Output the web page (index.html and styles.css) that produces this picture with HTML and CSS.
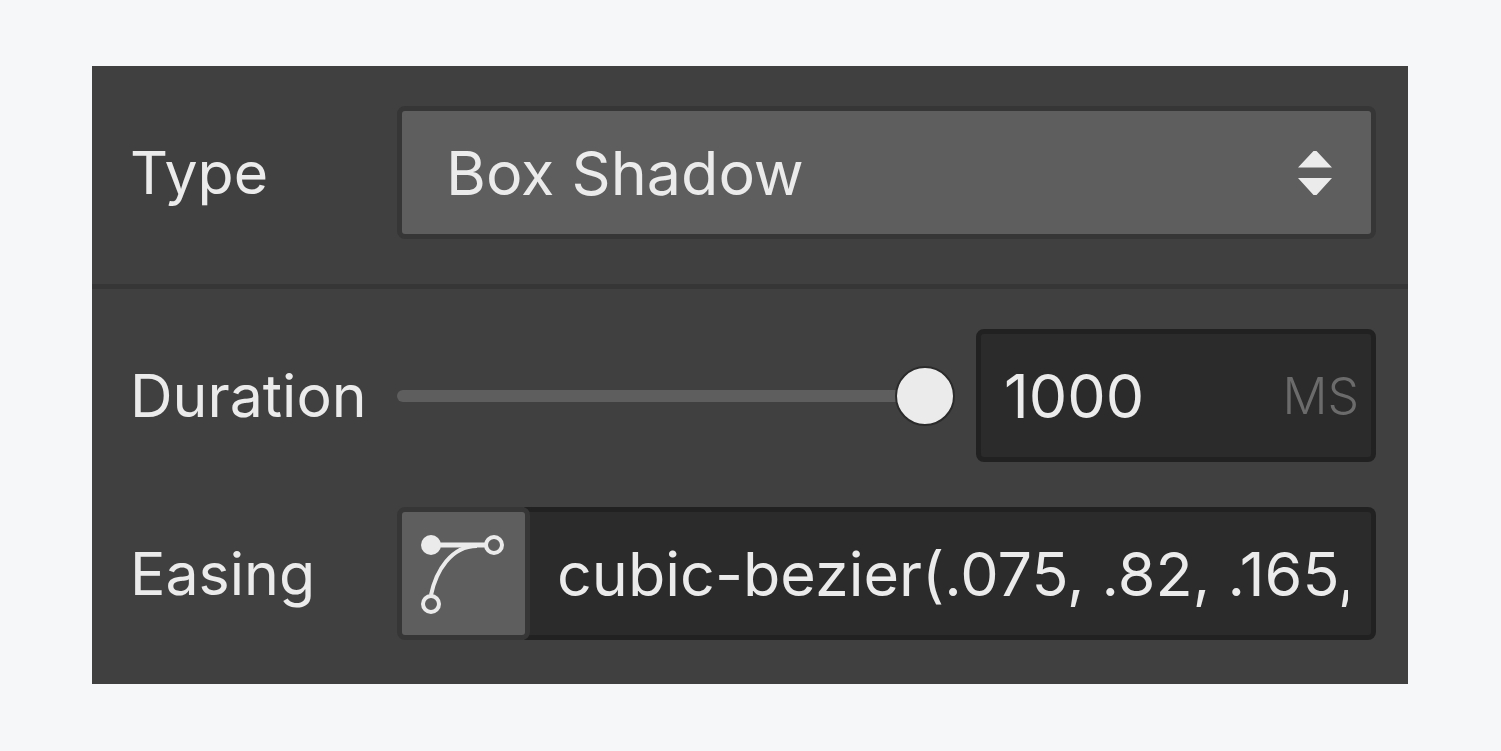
FILE: index.html
```html
<!DOCTYPE html>
<html lang="en">
<head>
    <meta charset="UTF-8">
    <meta name="viewport" content="width=device-width, initial-scale=1.0">
    <title>Transition</title>
    <link rel="stylesheet" href="styles.css">
</head>
<body>

<form class="panel">
    <div class="section">
        <div class="row">
            <label for="type">Type</label>
            <div class="select-box">
                <select id="type">
                    <option>Box Shadow</option>
                    <option>Opacity</option>
                    <option>Transform</option>
                </select>
                <svg class="arrows" width="34" height="46" viewBox="0 0 34 46" aria-hidden="true">
                    <path d="M15.500 1h3L34 17.500H0z M0 28h34L18.500 45h-3z"/>
                </svg>
            </div>
        </div>
    </div>

    <div class="section">
        <div class="row">
            <label for="duration">Duration</label>
            <input type="range" id="duration" class="slider" min="0" max="1000" value="1000">
            <div class="field number">
                <input type="text" id="durationValue" aria-label="Duration value" value="1000">
                <span class="unit">MS</span>
            </div>
        </div>
        <div class="row">
            <label for="easing">Easing</label>
            <div class="easing">
                <button type="button" class="curve" aria-label="Edit curve">
                    <svg width="86" height="84" viewBox="0 0 86 84" aria-hidden="true">
                        <circle class="dot" cx="10" cy="13" r="10"/>
                        <path class="handle" d="M10 13H64"/>
                        <path d="M10 63C15 39 30 14 56 14"/>
                        <circle cx="73" cy="13" r="8"/>
                        <circle cx="10" cy="72" r="8"/>
                    </svg>
                </button>
                <div class="field bezier">
                    <input type="text" id="easing" value="cubic-bezier(.075, .82, .165, 1)">
                </div>
            </div>
        </div>
    </div>
</form>

</body>
</html>
```
FILE: styles.css
```css
* {
    box-sizing: border-box;
}
body {
    font-family: Inter, sans-serif;
    font-weight: 400;
    font-optical-sizing: none;
    margin: 0;
    padding: 66px 93px 66px 92px;
    background: #f5f7f9;
    color: #ebebeb;
}
input, select, button {
    font: inherit;
    font-optical-sizing: none;
    color: inherit;
    margin: 0;
}
.panel {
    font-size: 61px;
    line-height: 74px;
    background: #404040;
}
.section {
    display: flex;
    flex-direction: column;
    gap: 45px;
    padding: 40px 32px 45px 38px;
}
.section + .section {
    padding-bottom: 44px;
    border-top: 5px solid #363636;
}
.row {
    display: flex;
    align-items: center;
}
label {
    width: 267px;
    flex-shrink: 0;
    font-size: 59px;
}
.select-box {
    flex: 1;
    display: grid;
    align-items: center;
}
.select-box select {
    grid-area: 1 / 1;
    width: 100%;
    height: 133px;
    appearance: none;
    padding: 0 100px 0 44px;
    background: #5e5e5e;
    border: 5px solid #363636;
    border-radius: 8px;
}
.arrows {
    grid-area: 1 / 1;
    justify-self: end;
    margin-right: 44px;
    fill: #ebebeb;
    pointer-events: none;
}
.slider {
    flex: 1;
    min-width: 0;
    height: 60px;
    appearance: none;
    background: none;
    margin-right: 21px;
}
.slider::-webkit-slider-runnable-track {
    height: 12px;
    border-radius: 6px;
    background: #5e5e5e;
}
.slider::-webkit-slider-thumb {
    appearance: none;
    width: 60px;
    height: 60px;
    margin-top: -24px;
    border: 2px solid #2b2b2b;
    border-radius: 50%;
    background: #ebebeb;
}
.field {
    display: flex;
    align-items: center;
    height: 133px;
    background: #2b2b2b;
    border: 5px solid #212121;
    border-radius: 8px;
}
.field input {
    flex: 1;
    min-width: 0;
    padding: 0;
    border: none;
    background: none;
}
.number {
    width: 400px;
    padding: 0 12px 0 23px;
}
.unit {
    font-size: 50px;
    font-weight: 300;
    color: #6b6b6b;
}
.easing {
    flex: 1;
    display: flex;
    min-width: 0;
}
.curve {
    width: 133px;
    height: 133px;
    flex-shrink: 0;
    display: flex;
    align-items: center;
    justify-content: center;
    padding: 0;
    background: #5e5e5e;
    border: 5px solid #363636;
    border-radius: 8px;
    z-index: 1;
}
.curve svg {
    fill: none;
    stroke: #ebebeb;
    stroke-width: 4;
}
.curve .handle {
    stroke-width: 5;
}
.curve .dot {
    fill: #ebebeb;
    stroke: none;
}
.bezier {
    flex: 1;
    min-width: 0;
    margin-left: -6px;
    padding: 0 23px 0 33px;
    border-left: none;
    border-radius: 0 8px 8px 0;
}
```
